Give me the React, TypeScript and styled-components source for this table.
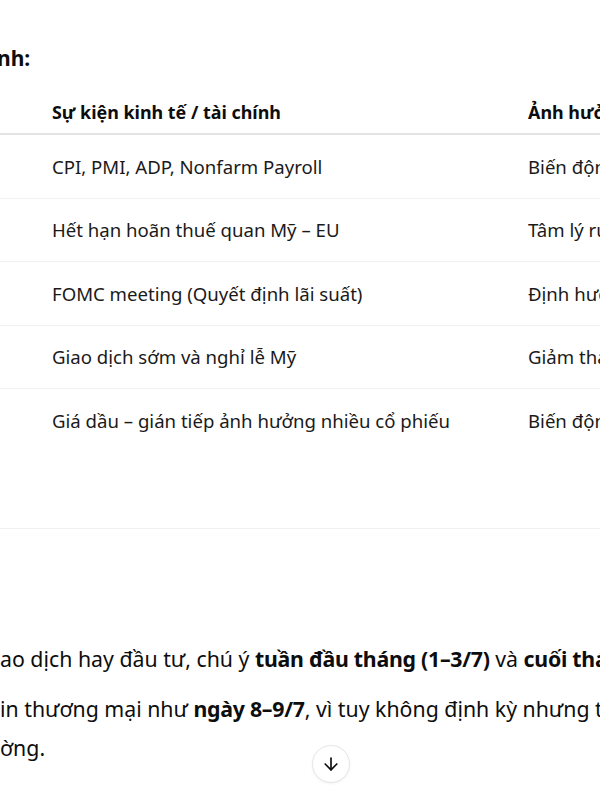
import styled, { createGlobalStyle } from 'styled-components';
import { ArrowDown } from 'lucide-react';

const GlobalStyle = createGlobalStyle`
    html, body{
        margin: 0;
        padding: 0;
        background: #ffffff;
        overflow: hidden;
    }
    body{
        font-family: "Noto Sans", "Open Sans", sans-serif;
        color: #0d0d0d;
    }
`;

const rows = [
    { event: 'CPI, PMI, ADP, Nonfarm Payroll', impact: 'Biến động mạnh theo số liệu' },
    { event: 'Hết hạn hoãn thuế quan Mỹ – EU', impact: 'Tâm lý rủi ro toàn cầu' },
    { event: 'FOMC meeting (Quyết định lãi suất)', impact: 'Định hướng dòng tiền' },
    { event: 'Giao dịch sớm và nghỉ lễ Mỹ', impact: 'Giảm thanh khoản' },
    { event: 'Giá dầu – gián tiếp ảnh hưởng nhiều cổ phiếu', impact: 'Biến động ngành năng lượng' },
];

export default function App() {
    return (
        <Page>
            <GlobalStyle />
            <Heading>nh:</Heading>
            <TableFrame>
                <Table>
                    <colgroup>
                        <col style={{ width: 528 }} />
                        <col style={{ width: 380 }} />
                    </colgroup>
                    <thead>
                        <tr>
                            <HeadCell $lead>Sự kiện kinh tế / tài chính</HeadCell>
                            <HeadCell>Ảnh hưởng chính</HeadCell>
                        </tr>
                    </thead>
                    <tbody>
                        {rows.map((row) => (
                            <Row key={row.event}>
                                <Cell $lead>{row.event}</Cell>
                                <Cell>{row.impact}</Cell>
                            </Row>
                        ))}
                    </tbody>
                </Table>
            </TableFrame>
            <Prose>
                <Para>
                    <Line>ao dịch hay đầu tư, chú ý <b>tuần đầu tháng (1–3/7)</b> và <b>cuối tháng (29–31/7)</b>.</Line>
                </Para>
                <Para>
                    <Line>in thương mại như <b>ngày 8–9/7</b>, vì tuy không định kỳ nhưng tác động mạnh đến thị</Line>
                    <Line>ờng.</Line>
                </Para>
            </Prose>
            <ScrollButton aria-label="Cuộn xuống">
                <ArrowDown size={20} strokeWidth={2} />
            </ScrollButton>
        </Page>
    );
}

const Page = styled.div`
    position: relative;
    width: 600px;
    height: 800px;
    overflow: hidden;
    padding-top: 42px;
    box-sizing: border-box;
`;

const Heading = styled.h3`
    margin: 0 0 0 -3px;
    font-size: 21px;
    line-height: 32px;
    font-weight: 700;
    white-space: nowrap;
`;

const TableFrame = styled.div`
    margin-top: 16px;
    width: 908px;
    padding-bottom: 76px;
    border-bottom: 1px solid #f0f0f0;
`;

const Table = styled.table`
    width: 908px;
    table-layout: fixed;
    border-collapse: collapse;
    font-size: 18.6px;
`;

const HeadCell = styled.th<{ $lead?: boolean }>`
    height: 43px;
    padding: 0 0 0 ${({ $lead }) => ($lead ? '52px' : '0')};
    text-align: left;
    font-size: 17.9px;
    font-weight: 700;
    white-space: nowrap;
    overflow: hidden;
    border-bottom: 2px solid #e3e3e3;
    vertical-align: middle;
`;

const Row = styled.tr`
    border-bottom: 1px solid #f1f1f1;
    &:last-child{
        border-bottom: none;
    }
`;

const Cell = styled.td<{ $lead?: boolean }>`
    height: 62.5px;
    padding: 0 0 0 ${({ $lead }) => ($lead ? '52px' : '0')};
    white-space: nowrap;
    overflow: hidden;
    vertical-align: middle;
    color: #1a1a1a;
`;

const Prose = styled.div`
    margin-top: 110px;
    font-size: 21.3px;
    line-height: 39px;
`;

const Para = styled.p`
    margin: 0 0 11px;
    b{
        font-weight: 700;
        letter-spacing: -0.25px;
    }
`;

const Line = styled.div`
    white-space: nowrap;
`;

const ScrollButton = styled.button`
    position: absolute;
    left: 312px;
    top: 745px;
    width: 38px;
    height: 38px;
    border-radius: 50%;
    border: 1px solid #e6e6e6;
    background: #ffffff;
    color: #0d0d0d;
    display: grid;
    place-content: center;
    padding: 0;
    box-shadow: 0 1px 3px rgba(0,0,0,0.05);
`;
